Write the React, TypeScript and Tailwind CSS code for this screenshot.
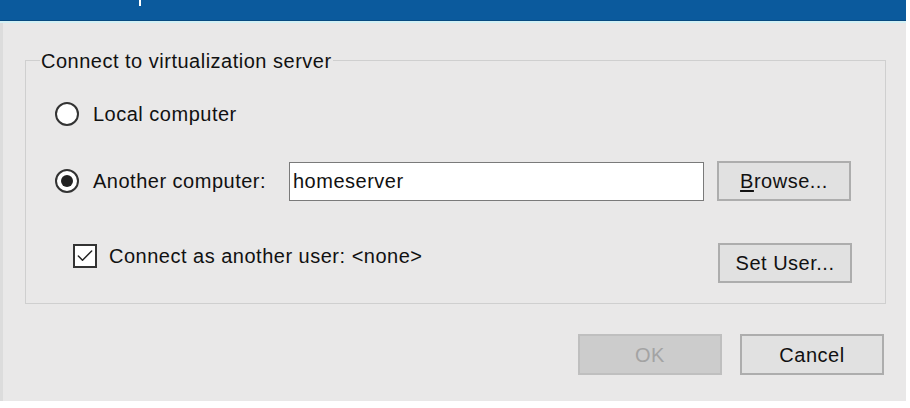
import { Check } from 'lucide-react';

const font = { fontFamily: '"Liberation Sans", Arial, sans-serif' };

function Radio({ checked }: { checked?: boolean }) {
  return (
    <div className="w-[24px] h-[24px] rounded-full border-2 border-[#333333] bg-white flex items-center justify-center shrink-0">
      {checked && <div className="w-[12px] h-[12px] rounded-full bg-[#222222]" />}
    </div>
  );
}

function WinButton({ children, disabled, className = '' }: { children: React.ReactNode; disabled?: boolean; className?: string }) {
  return (
    <button
      className={`h-[40px] border-2 flex items-center justify-center text-[20px] tracking-[0.5px] ${
        disabled ? 'bg-[#cccccc] border-[#bfbfbf] text-[#a3a3a3]' : 'bg-[#e1e1e1] border-[#adadad] text-[#111111]'
      } ${className}`}
    >
      {children}
    </button>
  );
}

export default function App() {
  return (
    <div className="w-[910px] h-[408px] bg-white overflow-hidden" style={font}>
      <div className="w-[906px] h-[401px] bg-[#e9e8e8] flex flex-col border-l-[3px] border-[#dcdcdc]">
        {/* Title bar */}
        <div className="relative h-[20px] bg-[#0b5a9d] -ml-[3px]">
          <div className="absolute left-[139px] top-0 w-[2px] h-[6px] bg-white" />
        </div>
        <div className="h-[1px] bg-[#084a80] -ml-[3px]" />
        <div className="h-[2px] bg-[#d3f0f4] -ml-[3px]" />

        {/* Group */}
        <fieldset className="ml-[22px] mr-[20px] mt-[24px] border border-[#cfcfcf] text-[#111111]">
          <legend className="ml-[14px] px-[1px] text-[20px] leading-[24px] tracking-[0.5px] pt-[2px]">
            Connect to virtualization server
          </legend>
          <div className="pl-[29px] pr-[33px] pt-[21px] pb-[20px] flex flex-col text-[20px] tracking-[0.5px]">
            <div className="h-[40px] flex items-center gap-[14px]">
              <Radio />
              <span>Local computer</span>
            </div>
            <div className="h-[40px] mt-[27px] flex items-center">
              <Radio checked />
              <span className="ml-[14px] w-[196px]">Another computer:</span>
              <div className="w-[415px] h-[39px] border border-[#7a7a7a] bg-white flex items-center pl-[3px]">
                homeserver
              </div>
              <WinButton className="ml-[13px] w-[134px]">
                <span>
                  <span className="underline underline-offset-2">B</span>rowse...
                </span>
              </WinButton>
            </div>
            <div className="h-[40px] mt-[42px] flex items-start">
              <div className="ml-[18px] -mt-[2px] flex items-center gap-[12px]">
                <div className="w-[24px] h-[24px] border-2 border-[#333333] bg-white flex items-center justify-center">
                  <Check size={20} strokeWidth={1.75} color="#222222" />
                </div>
                <span>Connect as another user: &lt;none&gt;</span>
              </div>
              <WinButton className="ml-auto w-[134px]">Set User...</WinButton>
            </div>
          </div>
        </fieldset>

        {/* Footer buttons */}
        <div className="flex justify-end gap-[18px] mt-[30px] pr-[22px]">
          <WinButton disabled className="w-[144px] h-[41px]">OK</WinButton>
          <WinButton className="w-[144px] h-[41px] border-[#8a8a8a]">Cancel</WinButton>
        </div>
      </div>
    </div>
  );
}
